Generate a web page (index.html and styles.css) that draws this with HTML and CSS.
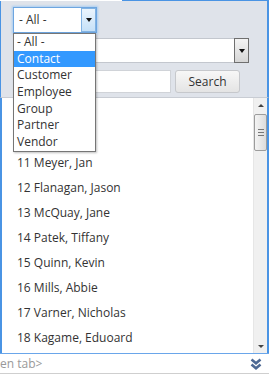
FILE: index.html
```html
<!DOCTYPE html>
<html lang="en">
<head>
<meta charset="UTF-8">
<meta name="viewport" content="width=device-width, initial-scale=1.0">
<title>Contact Picker</title>
<link rel="stylesheet" href="styles.css">
</head>
<body>

<div class="app">

  <!-- TAB LINE -->
  <div class="tabline"></div>

  <!-- FILTERS -->
  <div class="filters">
    <div class="select type-select">
      <span class="select-value">- All -</span>
      <span class="select-arrow"><i class="caret"></i></span>
    </div>

    <div class="select name-select">
      <span class="select-value"></span>
      <span class="select-arrow"><i class="caret"></i></span>
    </div>

    <div class="search-row">
      <input class="search-input" type="text">
      <button class="search-btn">Search</button>
    </div>
  </div>

  <!-- RESULTS -->
  <div class="results">
    <ul class="rows">
      <li class="empty"></li>
      <li class="empty"></li>
      <li>11 Meyer, Jan</li>
      <li>12 Flanagan, Jason</li>
      <li>13 McQuay, Jane</li>
      <li>14 Patek, Tiffany</li>
      <li>15 Quinn, Kevin</li>
      <li>16 Mills, Abbie</li>
      <li>17 Varner, Nicholas</li>
      <li>18 Kagame, Eduoard</li>
    </ul>
    <div class="scrollbar">
      <div class="sb-btn"><i class="tri-up"></i></div>
      <div class="sb-thumb"><i class="grip"></i></div>
      <div class="sb-track"></div>
      <div class="sb-btn"><i class="tri-down"></i></div>
    </div>
  </div>

  <!-- STATUS -->
  <div class="statusbar">
    <span class="tab-hint">en tab&gt;</span>
    <svg class="more" width="12" height="12" viewBox="0 0 12 12">
      <path d="M1.5 1.5 L6 5.2 L10.5 1.5" fill="none" stroke="#4d6994" stroke-width="2.6"/>
      <path d="M1.5 6.5 L6 10.2 L10.5 6.5" fill="none" stroke="#4d6994" stroke-width="2.6"/>
    </svg>
  </div>

  <!-- OPEN DROPDOWN -->
  <ul class="dropdown">
    <li>- All -</li>
    <li class="active">Contact</li>
    <li>Customer</li>
    <li>Employee</li>
    <li>Group</li>
    <li>Partner</li>
    <li>Vendor</li>
  </ul>

</div>

</body>
</html>
```

FILE: styles.css
```css
/* RESET */
*{
  margin:0;
  padding:0;
  box-sizing:border-box;
  font-family:"Open Sans", Arial, sans-serif;
}

body{
  background:#fff;
  color:#333;
  font-size:12px;
}

.app{
  position:relative;
  width:269px;
  height:374px;
  overflow:hidden;
}

/* TAB LINE */
.tabline{
  height:1px;
  margin-left:122px;
  background:#4a94e4;
}

/* FILTERS */
.filters{
  height:97px;
  background:#dfe3ea;
  border-left:1px solid #4a94e4;
  border-right:2px solid #4a94e4;
  border-bottom:1px solid #c8ccd3;
  padding:6px 0 0 12px;
}

.select{
  display:flex;
  background:#fff;
}

.select-value{
  flex:1;
  padding-left:5px;
  white-space:nowrap;
}

.select-arrow{
  width:15px;
  display:flex;
  justify-content:center;
  align-items:center;
}

.caret{
  width:0;
  height:0;
  border-left:3px solid transparent;
  border-right:3px solid transparent;
  border-top:4px solid #111;
}

.type-select{
  width:84px;
  height:26px;
  border:1px solid #6ea6e0;
  box-shadow:0 0 2px 1px #a9cdf2;
  line-height:24px;
}

.type-select .select-arrow{
  border:1px solid #82b3e3;
  background:linear-gradient(#eaf4fd,#c6e1f8);
}

.name-select{
  width:236px;
  height:25px;
  margin-top:5px;
  border:1px solid #c3c7ce;
}

.name-select .select-arrow{
  margin:-1px -1px -1px 0;
  border:1px solid #6f6f6f;
  background:linear-gradient(#f4f4f4,#d6d6d6);
}

.search-row{
  display:flex;
  margin-top:7px;
  gap:4px;
}

.search-input{
  width:158px;
  height:23px;
  border:1px solid #d0d3d8;
  background:#fff;
}

.search-btn{
  width:65px;
  height:23px;
  border:1px solid #c6c8cc;
  border-radius:3px;
  background:linear-gradient(#f7f7f7,#e4e4e4);
  color:#333;
  font-size:12px;
}

/* RESULTS */
.results{
  display:flex;
  height:255px;
  background:#fff;
  border-left:2px solid #4a94e4;
  border-right:2px solid #4a94e4;
}

.rows{
  flex:1;
  list-style:none;
  padding:2px 0 0 15px;
}

.rows li{
  height:25px;
  line-height:25px;
  white-space:nowrap;
}

/* SCROLLBAR */
.scrollbar{
  width:14px;
  display:flex;
  flex-direction:column;
  background:#f0f0f0;
  border-left:1px solid #e6e6e6;
}

.sb-btn{
  height:14px;
  display:flex;
  justify-content:center;
  align-items:center;
}

.tri-up,.tri-down{
  width:0;
  height:0;
  border-left:3px solid transparent;
  border-right:3px solid transparent;
}

.tri-up{border-bottom:3px solid #444;}
.tri-down{border-top:3px solid #444;}

.sb-thumb{
  height:37px;
  margin:2px 0 0 0;
  border:1px solid #9c9c9c;
  border-radius:2px;
  background:linear-gradient(90deg,#f4f4f4,#dcdcdc);
  display:flex;
  justify-content:center;
  align-items:center;
}

.grip{
  width:6px;
  height:7px;
  border-top:1px solid #777;
  border-bottom:1px solid #777;
  background:linear-gradient(transparent 2px,#777 2px,#777 3px,transparent 3px);
}

.sb-track{
  flex:1;
}

/* STATUS */
.statusbar{
  height:21px;
  display:flex;
  justify-content:space-between;
  align-items:center;
  border-top:1px solid #6aa6ea;
  border-bottom:1px solid #cfcfcf;
  padding-right:7px;
}

.tab-hint{
  color:#999;
  white-space:nowrap;
}

/* DROPDOWN */
.dropdown{
  position:absolute;
  left:13px;
  top:33px;
  width:83px;
  list-style:none;
  background:#fff;
  border:1px solid #767676;
  box-shadow:1px 1px 2px rgba(0,0,0,0.25);
}

.dropdown li{
  height:16.7px;
  line-height:16.7px;
  padding-left:3px;
  white-space:nowrap;
}

.dropdown li.active{
  background:#3399ff;
  color:#fff;
}
```
